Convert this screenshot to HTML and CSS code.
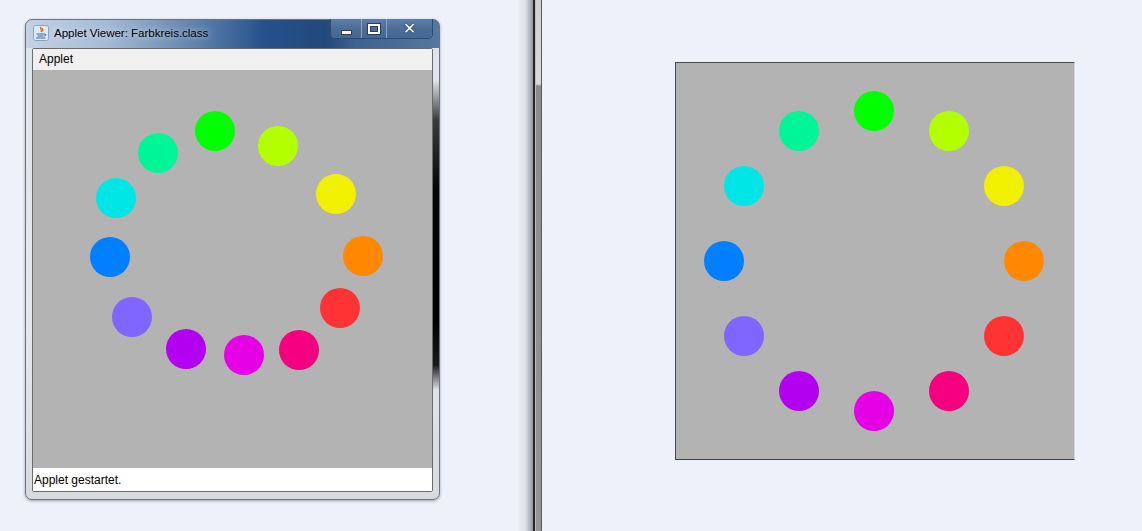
FILE: index.html
```html
<!DOCTYPE html>
<html>
<head>
<meta charset="utf-8">
<link rel="stylesheet" href="styles.css">
</head>
<body>
<div class="left">
  <div class="window">
    <div class="titlebar">
      <svg class="appicon" width="16" height="16" viewBox="0 0 16 16">
        <rect x="0.5" y="0.5" width="15" height="15" rx="2" fill="#dfe9f5" stroke="#8aa2c0"/>
        <path d="M8 2 C6 4 10 5 8 7 M9.5 3 C8.5 4.5 11 5 9.5 6.5" stroke="#e2661a" stroke-width="1.3" fill="none"/>
        <path d="M3.5 9 H11.5 M4.5 11 H10.5 M3 13 H12.5" stroke="#3c68a8" stroke-width="1.2" fill="none"/>
        <path d="M11.5 9 C13.5 9 13.5 11 11 11" stroke="#3c68a8" stroke-width="1" fill="none"/>
      </svg>
      <span class="title">Applet Viewer: Farbkreis.class</span>
      <div class="buttons">
        <div class="btn min"><span class="glyph-min"></span></div>
        <div class="btn max"><span class="glyph-max"></span></div>
        <div class="btn close"><span class="glyph-x">✕</span></div>
      </div>
    </div>
    <div class="client">
      <div class="menubar"><span class="menu">Applet</span></div>
      <div class="canvas">
        <div class="dot" style="left:162px;top:41px;background:#00ff00"></div>
        <div class="dot" style="left:225px;top:56px;background:#b3ff00"></div>
        <div class="dot" style="left:283px;top:104px;background:#f0f000"></div>
        <div class="dot" style="left:310px;top:166px;background:#ff8800"></div>
        <div class="dot" style="left:287px;top:218px;background:#ff3333"></div>
        <div class="dot" style="left:246px;top:260px;background:#f5007f"></div>
        <div class="dot" style="left:191px;top:265px;background:#e600e6"></div>
        <div class="dot" style="left:133px;top:259px;background:#b300f0"></div>
        <div class="dot" style="left:79px;top:227px;background:#8066ff"></div>
        <div class="dot" style="left:57px;top:167px;background:#0080ff"></div>
        <div class="dot" style="left:63px;top:108px;background:#00e6e6"></div>
        <div class="dot" style="left:105px;top:63px;background:#00f598"></div>
      </div>
      <div class="status">Applet gestartet.</div>
    </div>
  </div>
</div>
<div class="divider"><div class="band"></div></div>
<div class="right">
  <div class="panel">
    <div class="dot" style="left:178px;top:28px;background:#00ff00"></div>
    <div class="dot" style="left:253px;top:48px;background:#b3ff00"></div>
    <div class="dot" style="left:308px;top:103px;background:#f0f000"></div>
    <div class="dot" style="left:328px;top:178px;background:#ff8800"></div>
    <div class="dot" style="left:308px;top:253px;background:#ff3333"></div>
    <div class="dot" style="left:253px;top:308px;background:#f5007f"></div>
    <div class="dot" style="left:178px;top:328px;background:#e600e6"></div>
    <div class="dot" style="left:103px;top:308px;background:#b300f0"></div>
    <div class="dot" style="left:48px;top:253px;background:#8066ff"></div>
    <div class="dot" style="left:28px;top:178px;background:#0080ff"></div>
    <div class="dot" style="left:48px;top:103px;background:#00e6e6"></div>
    <div class="dot" style="left:103px;top:48px;background:#00f598"></div>
  </div>
</div>
</body>
</html>
```

FILE: styles.css
```css
* { box-sizing: border-box; }
html, body { margin: 0; padding: 0; }
body {
  width: 1142px;
  height: 531px;
  overflow: hidden;
  background: #edf1f9;
  display: flex;
  font-family: "Liberation Sans", Arial, sans-serif;
  font-size: 12px;
  color: #000;
}
.left {
  width: 525px;
  padding: 19px 0 0 25px;
  background: linear-gradient(to right, #edf1f9 517px, #dde1e8 525px);
}
.window {
  width: 415px;
  height: 481px;
  border: 1px solid #6a7380;
  border-radius: 7px;
  background:
    linear-gradient(to bottom, rgba(0,0,0,0) 60px, #3b3b3b 100px, #050505 170px, #000 300px, #1a1a1a 345px, rgba(0,0,0,0) 370px) right top / 6px 100% no-repeat,
    linear-gradient(to right, #c3d2e5 0px, #a5bbd6 80px, #5f82ad 170px, #24508a 240px, #22497c 300px, #3d6294 330px, #54789f 100%) left top / 100% 28px no-repeat,
    linear-gradient(to bottom, #dde4ec, #e6e9ed 60%, #d8dadd);
  box-shadow: 0 1px 3px rgba(0,0,0,0.35);
  display: flex;
  flex-direction: column;
  padding: 0 6px 7px 6px;
}
.titlebar {
  height: 28px;
  display: flex;
  align-items: flex-start;
  position: relative;
}
.appicon { margin: 5px 0 0 1px; flex: none; }
.title {
  margin: 6px 0 0 5px;
  font-size: 11.6px;
  letter-spacing: -0.05px;
  color: #000;
  text-shadow: 0 0 6px rgba(255,255,255,0.8);
}
.buttons {
  position: absolute;
  right: 0;
  top: -1px;
  display: flex;
  height: 20px;
  border: 1px solid #2f4a6e;
  border-top: none;
  border-radius: 0 0 5px 5px;
  overflow: hidden;
  box-shadow: inset 0 0 0 1px rgba(200,220,240,0.35);
}
.btn {
  height: 100%;
  display: flex;
  align-items: center;
  justify-content: center;
  background: linear-gradient(to bottom, #5d7fa8, #4b6e99 50%, #456892);
}
.btn + .btn { border-left: 1px solid #8aa3c2; }
.min { width: 30px; }
.max { width: 25px; }
.close { width: 46px; }
.glyph-min {
  width: 11px; height: 5px;
  background: #fff;
  border: 1px solid #333c48;
  margin-top: 7px;
}
.glyph-max {
  width: 12px; height: 10px;
  border: 2px solid #fff;
  outline: 1px solid #333c48;
  box-shadow: inset 0 0 0 1px #333c48;
}
.glyph-x {
  color: #fff;
  font-family: "DejaVu Sans", sans-serif;
  font-weight: bold;
  font-size: 16px;
  line-height: 1;
  text-shadow: 0 0 1px #1b2a40, 0 0 1px #1b2a40, 0 0 1px #1b2a40;
}
.client {
  flex: 1;
  border: 1px solid #6b6b6b;
  border-radius: 2px;
  display: flex;
  flex-direction: column;
  background: #fff;
}
.menubar {
  height: 21px;
  background: #f0f0f0;
  padding: 3px 0 0 6px;
}
.canvas {
  flex: 1;
  background: #b3b3b3;
  position: relative;
}
.status {
  height: 23px;
  background: #fff;
  padding: 5px 0 0 1px;
}
.dot {
  position: absolute;
  width: 40px;
  height: 40px;
  border-radius: 50%;
}
.divider {
  width: 17px;
  display: flex;
  background: linear-gradient(to right, #dde1e8 0, #a9adb4 6px, #8e9298 8px, #edf1f9 8px);
}
.band {
  margin-left: 8px;
  width: 9px;
  border-left: 2px solid #262626;
  border-right: 1px solid #5a5a5a;
  background: linear-gradient(to bottom, #d0d0d0 0, #dadada 84px, #8c8c8c 86px, #959595 100%);
  box-shadow: inset 1px 0 0 #bdbdbd;
}
.right {
  flex: 1;
  padding: 62px 0 0 133px;
}
.panel {
  position: relative;
  width: 400px;
  height: 398px;
  background: #b3b3b3;
  border-top: 1px solid #4a4a4a;
  border-left: 1px solid #4a4a4a;
  border-bottom: 1px solid #3e3e3e;
  border-right: 1px solid #d8d8d8;
}
```
